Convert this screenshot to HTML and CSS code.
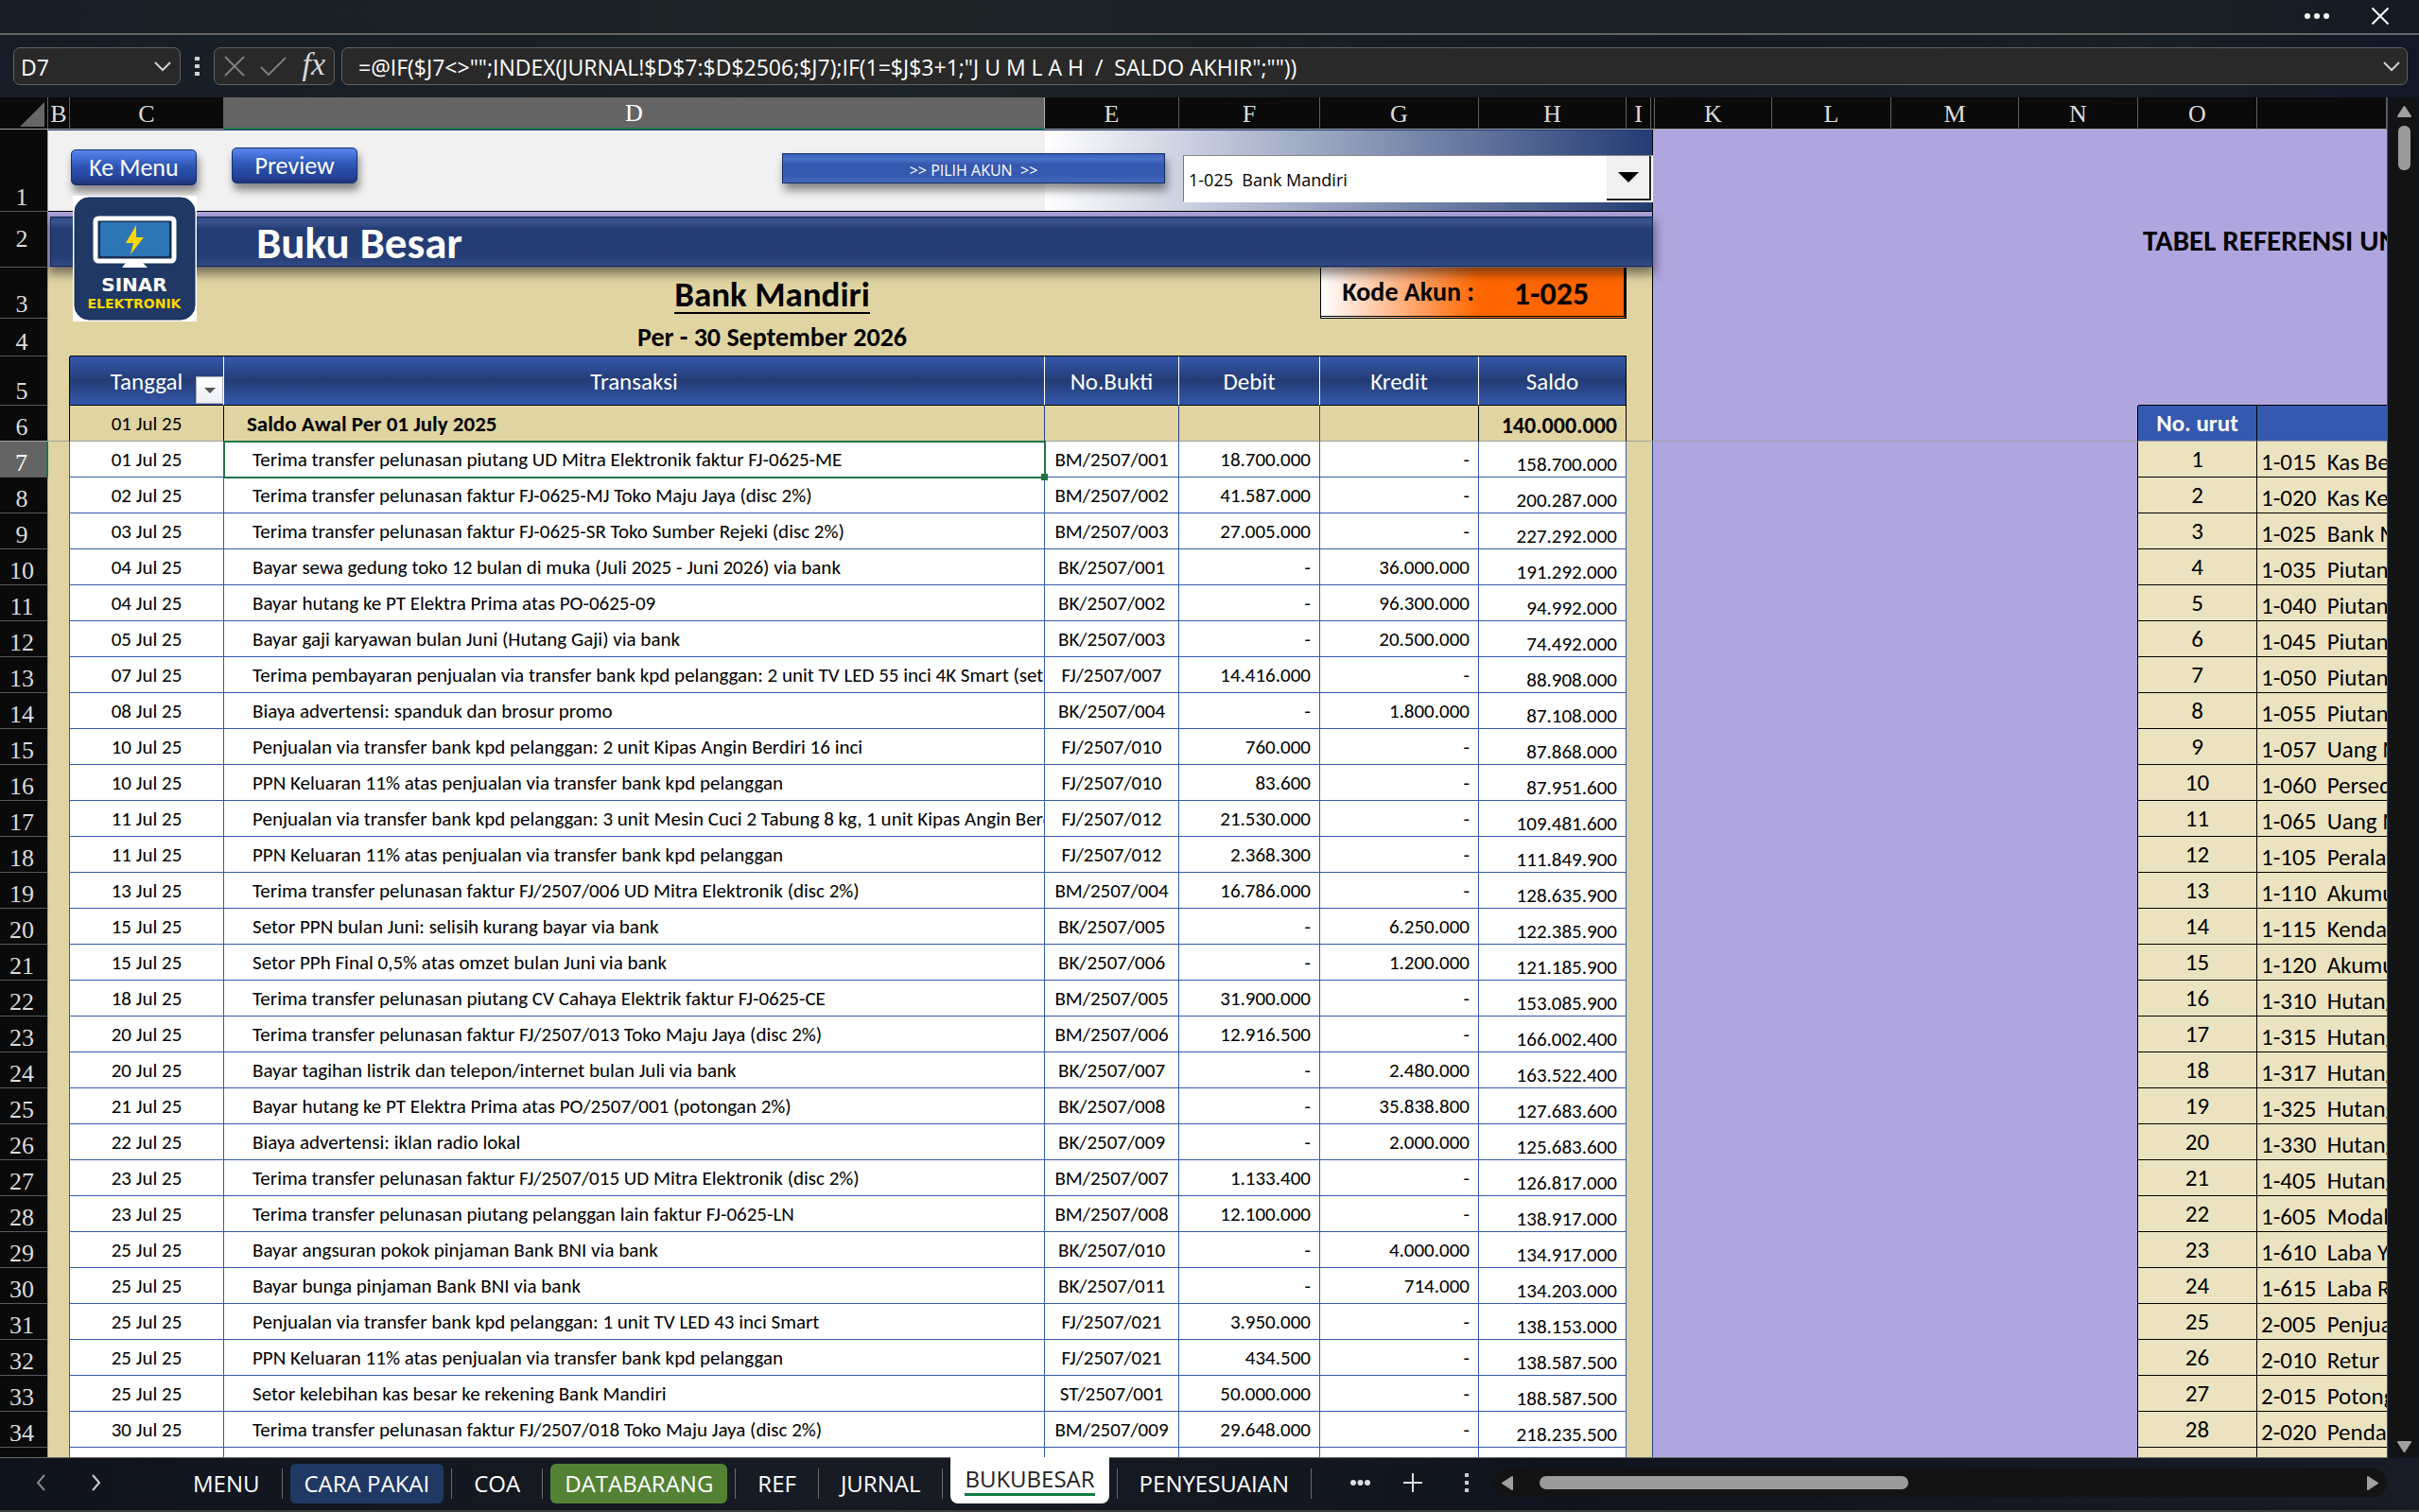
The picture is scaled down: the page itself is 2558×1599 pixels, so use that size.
FILE: index.html
```html
<!DOCTYPE html>
<html lang="id">
<head>
<meta charset="utf-8">
<title>Buku Besar</title>
<link rel="stylesheet" href="styles.css">
</head>
<body>
<div class="app">
  <header class="titlebar">
    <button class="icon-btn" aria-label="Opsi lainnya"><svg width="28" height="8" viewBox="0 0 28 8"><g fill="#fff"><circle cx="4" cy="4" r="3"/><circle cx="14" cy="4" r="3"/><circle cx="24" cy="4" r="3"/></g></svg></button>
    <button class="icon-btn" aria-label="Tutup"><svg width="20" height="20" viewBox="0 0 20 20"><path d="M1.500 1.500l17 17M18.500 1.500l-17 17" stroke="#fff" stroke-width="2"/></svg></button>
  </header>
  <div class="formula-bar">
    <div class="box name-box"><input class="name-input" aria-label="Kotak nama" value="D7"><svg width="18" height="11" viewBox="0 0 18 11"><path d="M1 1l8 8 8-8" fill="none" stroke="#d0d0d0" stroke-width="2"/></svg></div>
    <svg class="grip" width="5" height="20" viewBox="0 0 5 20"><path d="M0 0h5v4H0zM0 8h5v4H0zM0 16h5v4H0z" fill="#d0d0d0"/></svg>
    <div class="box fx-box">
      <button class="icon-btn" aria-label="Batal"><svg width="22" height="22" viewBox="0 0 22 22"><path d="M1 1l20 20M21 1L1 21" stroke="#7e7e7e" stroke-width="2"/></svg></button>
      <button class="icon-btn" aria-label="Masukkan"><svg width="28" height="20" viewBox="0 0 28 20"><path d="M1 11l8 8L27 1" fill="none" stroke="#7e7e7e" stroke-width="2"/></svg></button>
      <button class="icon-btn fx" aria-label="Sisipkan fungsi">fx</button>
    </div>
    <div class="box formula-box"><input class="formula-input" aria-label="Rumus" value='=@IF($J7&lt;&gt;"";INDEX(JURNAL!$D$7:$D$2506;$J7);IF(1=$J$3+1;"J U M L A H  /  SALDO AKHIR";""))'><svg width="18" height="11" viewBox="0 0 18 11"><path d="M1 1l8 8 8-8" fill="none" stroke="#d0d0d0" stroke-width="2"/></svg></div>
  </div>

  <main class="workspace">
    <div class="sheet">
      <table class="grid">
        <colgroup><col class="w-row"><col class="w-b"><col class="w-c"><col class="w-d"><col class="w-e"><col class="w-f"><col class="w-g"><col class="w-h"><col class="w-i"><col class="w-j"><col class="w-k"><col class="w-l"><col class="w-m"><col class="w-l"><col class="w-l"><col></colgroup>
        <thead>
          <tr class="letters"><th class="corner"><svg width="26" height="26" viewBox="0 0 26 26"><path d="M26 0v26H0z" fill="#666"/></svg></th><th>B</th><th>C</th><th class="active">D</th><th>E</th><th>F</th><th>G</th><th>H</th><th>I</th><th></th><th>K</th><th>L</th><th>M</th><th>N</th><th>O</th><th></th></tr>
        </thead>
        <tbody class="frozen">
          <tr class="r1"><th>1</th><td class="pale" colspan="3"></td><td class="fade" colspan="5"></td><td class="edge-dark"></td><td class="lilac" colspan="6"></td></tr>
          <tr class="r2"><th>2</th><td class="lilac" colspan="8"></td><td class="edge-lilac"></td><td class="lilac" colspan="4"></td><td class="lilac ref-title" colspan="2">TABEL REFERENSI UNTUK</td></tr>
          <tr class="r3"><th>3</th><td class="tan" colspan="2"></td><td class="tan account" colspan="3"><span>Bank Mandiri</span></td><td class="code-label">Kode Akun :</td><td class="code">1-025</td><td class="tan"></td><td class="edge-black"></td><td class="lilac" colspan="6"></td></tr>
          <tr class="r4"><th>4</th><td class="tan"></td><td class="tan under"></td><td class="tan under period" colspan="3">Per - 30 September 2026</td><td class="tan under" colspan="2"></td><td class="tan"></td><td class="edge-black"></td><td class="lilac" colspan="6"></td></tr>
          <tr class="r5"><th>5</th><td class="tan bk"></td><td class="head date-head">Tanggal<button class="filter" aria-label="Filter tanggal"><svg width="12" height="6" viewBox="0 0 12 6"><path d="M0 0h12L6 6z" fill="#555"/></svg></button></td><td class="head">Transaksi</td><td class="head">No.Bukti</td><td class="head">Debit</td><td class="head">Kredit</td><td class="head last">Saldo</td><td class="tan"></td><td class="edge-black"></td><td class="lilac" colspan="4"></td><td class="lilac under" colspan="2"></td></tr>
          <tr class="r6"><th>6</th><td class="tan bk"></td><td class="tan bk date">01 Jul 25</td><td class="tan bb opening">Saldo Awal Per 01 July 2025</td><td class="tan bb"></td><td class="tan bb"></td><td class="tan bk"></td><td class="tan bk opening-sum">140.000.000</td><td class="tan"></td><td class="edge-black"></td><td class="lilac bk" colspan="4"></td><td class="ref-head bk">No. urut</td><td class="ref-head"></td></tr>
        </tbody>
        <tbody class="ledger">
          <tr class="current"><th>7</th><td></td><td>01 Jul 25</td><td><span class="handle"></span>Terima transfer pelunasan piutang UD Mitra Elektronik faktur FJ-0625-ME</td><td>BM/2507/001</td><td>18.700.000</td><td>-</td><td>158.700.000</td><td></td><td></td><td colspan="4"></td><td>1</td><td>1-015  Kas Besar</td></tr>
          <tr><th>8</th><td></td><td>02 Jul 25</td><td>Terima transfer pelunasan faktur FJ-0625-MJ Toko Maju Jaya (disc 2%)</td><td>BM/2507/002</td><td>41.587.000</td><td>-</td><td>200.287.000</td><td></td><td></td><td colspan="4"></td><td>2</td><td>1-020  Kas Kecil</td></tr>
          <tr><th>9</th><td></td><td>03 Jul 25</td><td>Terima transfer pelunasan faktur FJ-0625-SR Toko Sumber Rejeki (disc 2%)</td><td>BM/2507/003</td><td>27.005.000</td><td>-</td><td>227.292.000</td><td></td><td></td><td colspan="4"></td><td>3</td><td>1-025  Bank Mandiri</td></tr>
          <tr><th>10</th><td></td><td>04 Jul 25</td><td>Bayar sewa gedung toko 12 bulan di muka (Juli 2025 - Juni 2026) via bank</td><td>BK/2507/001</td><td>-</td><td>36.000.000</td><td>191.292.000</td><td></td><td></td><td colspan="4"></td><td>4</td><td>1-035  Piutang</td></tr>
          <tr><th>11</th><td></td><td>04 Jul 25</td><td>Bayar hutang ke PT Elektra Prima atas PO-0625-09</td><td>BK/2507/002</td><td>-</td><td>96.300.000</td><td>94.992.000</td><td></td><td></td><td colspan="4"></td><td>5</td><td>1-040  Piutang</td></tr>
          <tr><th>12</th><td></td><td>05 Jul 25</td><td>Bayar gaji karyawan bulan Juni (Hutang Gaji) via bank</td><td>BK/2507/003</td><td>-</td><td>20.500.000</td><td>74.492.000</td><td></td><td></td><td colspan="4"></td><td>6</td><td>1-045  Piutang</td></tr>
          <tr><th>13</th><td></td><td>07 Jul 25</td><td>Terima pembayaran penjualan via transfer bank kpd pelanggan: 2 unit TV LED 55 inci 4K Smart (set)</td><td>FJ/2507/007</td><td>14.416.000</td><td>-</td><td>88.908.000</td><td></td><td></td><td colspan="4"></td><td>7</td><td>1-050  Piutang</td></tr>
          <tr><th>14</th><td></td><td>08 Jul 25</td><td>Biaya advertensi: spanduk dan brosur promo</td><td>BK/2507/004</td><td>-</td><td>1.800.000</td><td>87.108.000</td><td></td><td></td><td colspan="4"></td><td>8</td><td>1-055  Piutang</td></tr>
          <tr><th>15</th><td></td><td>10 Jul 25</td><td>Penjualan via transfer bank kpd pelanggan: 2 unit Kipas Angin Berdiri 16 inci</td><td>FJ/2507/010</td><td>760.000</td><td>-</td><td>87.868.000</td><td></td><td></td><td colspan="4"></td><td>9</td><td>1-057  Uang Muka</td></tr>
          <tr><th>16</th><td></td><td>10 Jul 25</td><td>PPN Keluaran 11% atas penjualan via transfer bank kpd pelanggan</td><td>FJ/2507/010</td><td>83.600</td><td>-</td><td>87.951.600</td><td></td><td></td><td colspan="4"></td><td>10</td><td>1-060  Persediaan</td></tr>
          <tr><th>17</th><td></td><td>11 Jul 25</td><td>Penjualan via transfer bank kpd pelanggan: 3 unit Mesin Cuci 2 Tabung 8 kg, 1 unit Kipas Angin Berdiri</td><td>FJ/2507/012</td><td>21.530.000</td><td>-</td><td>109.481.600</td><td></td><td></td><td colspan="4"></td><td>11</td><td>1-065  Uang Muka</td></tr>
          <tr><th>18</th><td></td><td>11 Jul 25</td><td>PPN Keluaran 11% atas penjualan via transfer bank kpd pelanggan</td><td>FJ/2507/012</td><td>2.368.300</td><td>-</td><td>111.849.900</td><td></td><td></td><td colspan="4"></td><td>12</td><td>1-105  Peralatan</td></tr>
          <tr><th>19</th><td></td><td>13 Jul 25</td><td>Terima transfer pelunasan faktur FJ/2507/006 UD Mitra Elektronik (disc 2%)</td><td>BM/2507/004</td><td>16.786.000</td><td>-</td><td>128.635.900</td><td></td><td></td><td colspan="4"></td><td>13</td><td>1-110  Akumulasi</td></tr>
          <tr><th>20</th><td></td><td>15 Jul 25</td><td>Setor PPN bulan Juni: selisih kurang bayar via bank</td><td>BK/2507/005</td><td>-</td><td>6.250.000</td><td>122.385.900</td><td></td><td></td><td colspan="4"></td><td>14</td><td>1-115  Kendaraan</td></tr>
          <tr><th>21</th><td></td><td>15 Jul 25</td><td>Setor PPh Final 0,5% atas omzet bulan Juni via bank</td><td>BK/2507/006</td><td>-</td><td>1.200.000</td><td>121.185.900</td><td></td><td></td><td colspan="4"></td><td>15</td><td>1-120  Akumulasi</td></tr>
          <tr><th>22</th><td></td><td>18 Jul 25</td><td>Terima transfer pelunasan piutang CV Cahaya Elektrik faktur FJ-0625-CE</td><td>BM/2507/005</td><td>31.900.000</td><td>-</td><td>153.085.900</td><td></td><td></td><td colspan="4"></td><td>16</td><td>1-310  Hutang</td></tr>
          <tr><th>23</th><td></td><td>20 Jul 25</td><td>Terima transfer pelunasan faktur FJ/2507/013 Toko Maju Jaya (disc 2%)</td><td>BM/2507/006</td><td>12.916.500</td><td>-</td><td>166.002.400</td><td></td><td></td><td colspan="4"></td><td>17</td><td>1-315  Hutang</td></tr>
          <tr><th>24</th><td></td><td>20 Jul 25</td><td>Bayar tagihan listrik dan telepon/internet bulan Juli via bank</td><td>BK/2507/007</td><td>-</td><td>2.480.000</td><td>163.522.400</td><td></td><td></td><td colspan="4"></td><td>18</td><td>1-317  Hutang</td></tr>
          <tr><th>25</th><td></td><td>21 Jul 25</td><td>Bayar hutang ke PT Elektra Prima atas PO/2507/001 (potongan 2%)</td><td>BK/2507/008</td><td>-</td><td>35.838.800</td><td>127.683.600</td><td></td><td></td><td colspan="4"></td><td>19</td><td>1-325  Hutang</td></tr>
          <tr><th>26</th><td></td><td>22 Jul 25</td><td>Biaya advertensi: iklan radio lokal</td><td>BK/2507/009</td><td>-</td><td>2.000.000</td><td>125.683.600</td><td></td><td></td><td colspan="4"></td><td>20</td><td>1-330  Hutang</td></tr>
          <tr><th>27</th><td></td><td>23 Jul 25</td><td>Terima transfer pelunasan faktur FJ/2507/015 UD Mitra Elektronik (disc 2%)</td><td>BM/2507/007</td><td>1.133.400</td><td>-</td><td>126.817.000</td><td></td><td></td><td colspan="4"></td><td>21</td><td>1-405  Hutang</td></tr>
          <tr><th>28</th><td></td><td>23 Jul 25</td><td>Terima transfer pelunasan piutang pelanggan lain faktur FJ-0625-LN</td><td>BM/2507/008</td><td>12.100.000</td><td>-</td><td>138.917.000</td><td></td><td></td><td colspan="4"></td><td>22</td><td>1-605  Modal</td></tr>
          <tr><th>29</th><td></td><td>25 Jul 25</td><td>Bayar angsuran pokok pinjaman Bank BNI via bank</td><td>BK/2507/010</td><td>-</td><td>4.000.000</td><td>134.917.000</td><td></td><td></td><td colspan="4"></td><td>23</td><td>1-610  Laba Yang</td></tr>
          <tr><th>30</th><td></td><td>25 Jul 25</td><td>Bayar bunga pinjaman Bank BNI via bank</td><td>BK/2507/011</td><td>-</td><td>714.000</td><td>134.203.000</td><td></td><td></td><td colspan="4"></td><td>24</td><td>1-615  Laba Rugi</td></tr>
          <tr><th>31</th><td></td><td>25 Jul 25</td><td>Penjualan via transfer bank kpd pelanggan: 1 unit TV LED 43 inci Smart</td><td>FJ/2507/021</td><td>3.950.000</td><td>-</td><td>138.153.000</td><td></td><td></td><td colspan="4"></td><td>25</td><td>2-005  Penjualan</td></tr>
          <tr><th>32</th><td></td><td>25 Jul 25</td><td>PPN Keluaran 11% atas penjualan via transfer bank kpd pelanggan</td><td>FJ/2507/021</td><td>434.500</td><td>-</td><td>138.587.500</td><td></td><td></td><td colspan="4"></td><td>26</td><td>2-010  Retur</td></tr>
          <tr><th>33</th><td></td><td>25 Jul 25</td><td>Setor kelebihan kas besar ke rekening Bank Mandiri</td><td>ST/2507/001</td><td>50.000.000</td><td>-</td><td>188.587.500</td><td></td><td></td><td colspan="4"></td><td>27</td><td>2-015  Potongan</td></tr>
          <tr><th>34</th><td></td><td>30 Jul 25</td><td>Terima transfer pelunasan faktur FJ/2507/018 Toko Maju Jaya (disc 2%)</td><td>BM/2507/009</td><td>29.648.000</td><td>-</td><td>218.235.500</td><td></td><td></td><td colspan="4"></td><td>28</td><td>2-020  Pendapatan</td></tr>
          <tr><th></th><td></td><td></td><td></td><td></td><td></td><td></td><td></td><td></td><td></td><td colspan="4"></td><td></td><td></td></tr>
        </tbody>
      </table>

      <div class="banner"><h1>Buku Besar</h1></div>
      <button class="shape to-menu">Ke Menu</button>
      <button class="shape preview">Preview</button>
      <label class="pick" for="akun">&gt;&gt; PILIH AKUN &nbsp;&gt;&gt;</label>
      <div class="combo">
        <select id="akun"><option>1-025 &nbsp;Bank Mandiri</option></select>
        <span class="combo-arrow"><svg width="22" height="11" viewBox="0 0 22 11"><path d="M0 0h22L11 11z"/></svg></span>
      </div>
      <div class="logo">
        <svg width="131" height="133" viewBox="0 0 131 133" role="img" aria-label="Sinar Elektronik">
          <rect width="131" height="133" fill="#fff"/>
          <rect x="2" y="2" width="127" height="129" rx="15" fill="#1f3864" stroke="#152c5c"/>
          <rect x="24" y="24" width="83" height="45" rx="3" fill="#183056" stroke="#fff" stroke-width="5"/>
          <rect x="29" y="28" width="73" height="36" rx="2" fill="#2e75b6"/>
          <path d="M67 31L56 50h8l-3 12 14-18h-8z" fill="#ffd700"/>
          <path d="M56 71h18l5 5H52z" fill="#fff"/>
          <text x="65" y="101" text-anchor="middle" class="logo-a">SINAR</text>
          <text x="65" y="119" text-anchor="middle" class="logo-b">ELEKTRONIK</text>
        </svg>
      </div>
    </div>
    <div class="vscroll">
      <svg width="15" height="12" viewBox="0 0 15 12"><path d="M7.500 1L14 11H1z" fill="#a0a0a0" stroke="#a0a0a0" stroke-width="2" stroke-linejoin="round"/></svg>
      <span class="vthumb"></span>
      <svg width="15" height="12" viewBox="0 0 15 12"><path d="M7.500 11L14 1H1z" fill="#a0a0a0" stroke="#a0a0a0" stroke-width="2" stroke-linejoin="round"/></svg>
    </div>
  </main>

  <footer class="tabbar">
    <div class="nav">
      <button class="icon-btn" aria-label="Sebelumnya"><svg width="11" height="18" viewBox="0 0 11 18"><path d="M9 1L2 9l7 8" fill="none" stroke="#888" stroke-width="2"/></svg></button>
      <button class="icon-btn" aria-label="Berikutnya"><svg width="11" height="18" viewBox="0 0 11 18"><path d="M2 1l7 8-7 8" fill="none" stroke="#ccc" stroke-width="2"/></svg></button>
    </div>
    <nav class="tabs">
      <button class="tab">MENU</button>
      <button class="tab navy">CARA PAKAI</button>
      <button class="tab">COA</button>
      <button class="tab green">DATABARANG</button>
      <button class="tab">REF</button>
      <button class="tab">JURNAL</button>
      <button class="tab open"><span>BUKUBESAR</span></button>
      <button class="tab">PENYESUAIAN</button>
    </nav>
    <div class="tools">
      <button class="icon-btn" aria-label="Lembar lain"><svg width="21" height="6" viewBox="0 0 21 6"><g fill="#ddd"><circle cx="3" cy="3" r="3"/><circle cx="10.500" cy="3" r="3"/><circle cx="18" cy="3" r="3"/></g></svg></button>
      <button class="icon-btn" aria-label="Lembar baru"><svg width="20" height="20" viewBox="0 0 20 20"><path d="M10 0v20M0 10h20" stroke="#ddd" stroke-width="2"/></svg></button>
      <svg width="4" height="20" viewBox="0 0 4 20"><path d="M0 0h4v4H0zM0 8h4v4H0zM0 16h4v4H0z" fill="#ccc"/></svg>
    </div>
    <div class="hscroll">
      <svg width="12" height="15" viewBox="0 0 12 15"><path d="M1 7.500L11 1v13z" fill="#a0a0a0" stroke="#a0a0a0" stroke-width="2" stroke-linejoin="round"/></svg>
      <span class="htrack"><span class="hthumb"></span></span>
      <svg width="12" height="15" viewBox="0 0 12 15"><path d="M11 7.500L1 1v13z" fill="#a0a0a0" stroke="#a0a0a0" stroke-width="2" stroke-linejoin="round"/></svg>
    </div>
  </footer>
</div>
</body>
</html>
```
FILE: styles.css
```css
* { box-sizing: border-box; }
body { margin: 0; background: #10141c; color: #fff; font-family: Calibri, Carlito, Lato, sans-serif; }
button, input, select { font: inherit; color: inherit; }
svg { display: block; flex: none; }

.app { display: flex; flex-direction: column; height: 100vh; overflow: hidden; border-bottom: 2px solid #3c3c3c; }
.icon-btn { display: flex; align-items: center; padding: 0; border: 0; background: none; }

/* window chrome */
.titlebar { display: flex; justify-content: flex-end; align-items: center; gap: 43px; height: 37px; padding: 0 31px 2px 0; border-bottom: 2px solid #666; background: linear-gradient(90deg, #171e26, #1d2527 35%, #1a2128 60%, #1b2326 85%, #141a24); }
.formula-bar { display: flex; align-items: center; height: 66px; padding: 0 12px 0 14px; background: linear-gradient(90deg, #161d26, #1b2426 40%, #141a22 70%, #182026 88%, #121826); font-family: "Open Sans", "Noto Sans", sans-serif; font-size: 23px; }
.box { display: flex; align-items: center; height: 40px; border: 1px solid #616161; border-radius: 7px; background: #292929; }
.box input { flex: 1; min-width: 0; border: 0; padding: 2px 0 0; background: none; outline: 0; }
.name-box { width: 177px; padding: 0 9px 0 7px; }
.grip { margin: 0 15px; }
.fx-box { width: 128px; justify-content: space-between; padding: 0 9px 0 10px; margin-right: 7px; }
.fx { font: italic 34px/32px "Liberation Serif", serif; color: #d8d8d8; padding-bottom: 4px; }
.formula-box { flex: 1; padding: 0 7px 0 17px; }

/* spreadsheet */
.workspace { display: flex; flex: 1; min-height: 0; }
.sheet { position: relative; flex: 1; overflow: hidden; background: #b0a6df; border-right: 1px solid #555; border-bottom: 1px solid #666; color: #000; }
.grid { width: 100%; table-layout: fixed; border-collapse: separate; border-spacing: 0; font-size: 21px; line-height: 26px; }
.w-row { width: 51px; } .w-b { width: 23px; } .w-c { width: 163px; } .w-d { width: 868px; }
.w-e { width: 142px; } .w-f { width: 149px; } .w-g { width: 168px; } .w-h { width: 156px; }
.w-i { width: 26px; } .w-j { width: 4px; } .w-k { width: 124px; } .w-l { width: 126px; } .w-m { width: 135px; }
.grid td, .grid th { padding: 0; overflow: hidden; white-space: pre; }
.grid th { background: #0a0a0a; color: #dcdcdc; font: 26px/28px Constantia, "Liberation Serif", serif; border-right: 1px solid #606060; }
.letters th { height: 34px; border-bottom: 1px solid #a0a0a0; padding-top: 2px !important; }
.letters .active { background: #646464; color: #fff; border-bottom: 2px solid #217346; border-right-color: #b0b0b0; }
.corner svg { margin: 1px 0 0 21px; }
tbody th { vertical-align: bottom; padding-right: 4px !important; border-bottom: 1px solid #5a5a5a; border-right: 1px solid #a0a0a0 !important; }
.r1 { height: 87px; } .r2 { height: 59px; } .r3 { height: 54px; } .r4 { height: 40px; } .r5 { height: 52px; } .r6 { height: 38px; }
.r2 th { vertical-align: middle; }
.lilac { background: #b0a6df; }
.tan { background: #e0d5a2; }
.pale { background: #f1f1f1; }
.fade { background: linear-gradient(90deg, #fff, #c4cbdc 26%, #243c74); }
.pale, .fade { border-top: 1px solid #1f3a78; border-bottom: 1px solid #000; }
.edge-dark { background: linear-gradient(90deg, #243c74 1px, #000 1px 2px, #b0a6df 2px); }
.edge-lilac { background: linear-gradient(90deg, #b0a6df 1px, #000 1px 2px, #b0a6df 2px); }
.edge-black { background: linear-gradient(90deg, #e0d5a2 1px, #000 1px 2px, #b0a6df 2px); }
.grid .ref-title { font-size: 31px; font-weight: bold; padding-left: 5px; overflow: visible; }
.account { text-align: center; font-size: 37px; font-weight: bold; }
.grid .account { padding-top: 5px; }
.account span { border-bottom: 2px solid #000; display: inline-block; line-height: 36px; }
.period { text-align: center; font-size: 28px; line-height: 28px; font-weight: bold; }
.grid .code-label, .grid .code { font-weight: bold; border-bottom: 3px double #000; }
.grid .code-label { font-size: 28px; text-align: right; padding-right: 5px; border-left: 1px solid #000; background: linear-gradient(90deg, #fff, #ffd9c2 25%, #ff6600); }
.grid .code { font-size: 34px; line-height: 34px; padding-top: 4px; text-align: center; background: #ff6600; border-right: 3px solid #000; }
.under { border-bottom: 1px solid #000; }
.bk { border-right: 1px solid #000; }
.bb { border-right: 1px solid #24418a; }
.grid .head { position: relative; padding-top: 2px; text-align: center; color: #fff; font-size: 25px; background: linear-gradient(#3358ac, #243c74 50%, #3358ac); border-right: 1px solid #fff; border-bottom: 1px solid #000; }
.grid .last { border-right-color: #000; }
.filter { position: absolute; right: 0; bottom: 1px; display: flex; justify-content: center; align-items: center; width: 29px; height: 29px; padding: 0; border: 1px solid #a9adb8; background: linear-gradient(#fff, #eceef4); }
.r6 td, .r6 th { border-bottom: 1px solid #a0a0a0; }
.date { text-align: center; }
.grid .opening { font-size: 23px; font-weight: bold; padding-left: 24px; }
.grid .opening-sum { font-size: 24px; font-weight: bold; text-align: right; padding: 5px 9px 0 0; }
.ref-head { background: #3559ae; color: #fff; font-size: 25px; font-weight: bold; text-align: center; }

.ledger tr { height: 38px; }
.ledger td { background: #fff; border-right: 1px solid #3559ae; border-bottom: 1px solid #3559ae; }
.ledger td:nth-child(2), .ledger td:nth-child(9) { background: #e0d5a2; border-bottom: 0; }
.ledger td:nth-child(9) { border-right: 0; }
.ledger td:nth-child(3), .ledger td:nth-child(5), .ledger td:nth-child(12) { text-align: center; }
.ledger td:nth-child(4) { padding-left: 30px; }
.ledger td:nth-child(6), .ledger td:nth-child(7), .ledger td:nth-child(8) { text-align: right; padding-right: 9px; }
.ledger td:nth-child(8) { vertical-align: bottom; }
.ledger td:nth-child(10) { border: 0; background: linear-gradient(90deg, #e0d5a2 1px, #24418a 1px 2px, #b0a6df 2px); }
.ledger td:nth-child(11) { border: 0; border-right: 1px solid #000; background: #b0a6df; }
.ledger td:nth-child(12), .ledger td:nth-child(13) { background: #ebe3c0; border-color: #000; font-size: 25px; }
.ledger td:nth-child(13) { vertical-align: bottom; padding-left: 4px; line-height: 31px; border-right: 0; }
.ledger .current th { background: #646464; color: #fff; border-right: 2px solid #217346 !important; }
.current td:nth-child(4) { position: relative; overflow: visible; outline: 2px solid #217346; outline-offset: -1px; z-index: 1; }
.handle { position: absolute; right: -4px; bottom: -4px; width: 7px; height: 7px; background: #217346; }

/* shapes drawn over the cells */
.banner { position: absolute; left: 53px; top: 126px; width: 1695px; height: 53px; padding-left: 217px; border: 1px solid #14264f; background: linear-gradient(#2f4a86, #3a5490 10%, #243c74 24%, #243c74 78%, #304a84); box-shadow: 0 6px 10px 2px rgba(20, 20, 20, .5); color: #fff; }
.banner h1 { margin: 0; font-size: 47px; line-height: 54px; }
.shape, .pick { position: absolute; color: #fff; text-align: center; box-shadow: 2px 7px 9px rgba(0, 0, 0, .45); }
.shape { width: 133px; height: 38px; padding: 0; border: 1px solid #16306c; border-radius: 5px; font-size: 26px; line-height: 34px; background: linear-gradient(#5a86ec, #4a77e0 15%, #2f57b4 45%, #24449a 80%, #1c3478); }
.to-menu { left: 75px; top: 55px; }
.preview { left: 245px; top: 53px; }
.pick { left: 827px; top: 59px; width: 405px; height: 32px; border: 1px solid #152c63; font: 16px/34px "Open Sans", "Noto Sans", sans-serif; background: linear-gradient(#3a62ba, #4a70c8 18%, #3559ae 36%, #3559ae 70%, #4468be); }
.combo { position: absolute; left: 1251px; top: 61px; display: flex; width: 497px; height: 50px; background: #fff; border: 1px solid #fff; border-left-color: #777; border-top-color: #8a8a8a; }
.combo select { flex: 1; appearance: none; border: 0; padding: 2px 0 0 5px; background: none; outline: 0; font: 18px "Open Sans", "Noto Sans", sans-serif; }
.combo-arrow { display: flex; align-items: center; justify-content: center; width: 47px; height: 47px; margin-right: 1px; background: #f0f0f0; border-right: 2px solid #222; border-bottom: 2px solid #222; pointer-events: none; }
.logo { position: absolute; left: 77px; top: 104px; }
.logo-a, .logo-b { font-family: "DejaVu Sans", sans-serif; font-weight: bold; }
.logo-a { font-size: 20px; fill: #fff; }
.logo-b { font-size: 14px; fill: #ffd700; }

/* scroll bars and sheet tabs */
.vscroll { display: flex; flex-direction: column; align-items: center; width: 28px; margin: 0 2px 0 3px; padding: 9px 0 6px; border-radius: 14px; background: #131313; }
.vthumb { width: 13px; height: 47px; margin: 9px 0 auto; border-radius: 6px; background: #9b9b9b; }
.tabbar { display: flex; height: 55px; padding-right: 34px; background: linear-gradient(90deg, #0f131d, #171c24 35%, #10141e 65%, #171c26); }
.nav { display: flex; align-items: center; gap: 47px; width: 181px; padding: 0 0 4px 38px; }
.tabs { display: flex; }
.tab { position: relative; height: 42px; margin: 6px 9px 0 8px; padding: 0 15px; border: 0; border-radius: 6px; background: none; font: 24px/42px "Open Sans", "Noto Sans", sans-serif; }
.tab::after { content: ""; position: absolute; right: -9px; top: 5px; width: 1px; height: 32px; background: #6a6a6a; }
.navy { background: #203864; }
.green { background: #548235; }
.open { height: 49px; margin-top: -1px; border-radius: 0 0 8px 8px; background: #fff; color: #222; }
.open::after { top: 12px; }
.open span { display: block; height: 37px; line-height: 38px; margin-bottom: 4px; border-bottom: 3px solid #107c41; }
.tools { display: flex; align-items: center; gap: 35px; padding: 0 26px 4px 41px; }
.tools > :last-child { margin-left: 10px; }
.hscroll { display: flex; align-items: center; flex: 1; height: 30px; margin-top: 11px; padding: 0 9px; border-radius: 15px; background: #131313; }
.htrack { flex: 1; padding: 0 28px; }
.hthumb { display: block; width: 46%; height: 14px; border-radius: 7px; background: #9b9b9b; }
```
